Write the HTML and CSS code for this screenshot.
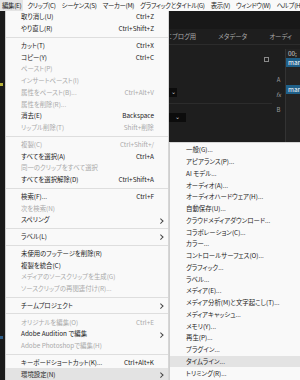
FILE: index.html
```html
<!DOCTYPE html>
<html lang="ja">
<head>
    <meta charset="UTF-8">
    <meta name="viewport" content="width=device-width, initial-scale=1.0">
    <title>編集メニュー</title>
    <link rel="stylesheet" href="styles.css">
</head>
<body>
    <div class="menubar">
        <span class="top-item active">編集(E)</span>
        <span class="top-item">クリップ(C)</span>
        <span class="top-item">シーケンス(S)</span>
        <span class="top-item">マーカー(M)</span>
        <span class="top-item">グラフィックとタイトル(G)</span>
        <span class="top-item">表示(V)</span>
        <span class="top-item">ウィンドウ(W)</span>
        <span class="top-item">ヘルプ(H)</span>
    </div>

    <div class="workspace">
        <div class="app-edge">
            <span class="edge-mark yellow"></span>
            <span class="edge-mark blue"></span>
        </div>

        <ul class="menu main-menu">
            <li class="item"><span class="label">取り消し(U)</span><span class="key">Ctrl+Z</span></li>
            <li class="item"><span class="label">やり直し(R)</span><span class="key">Ctrl+Shift+Z</span></li>
            <li class="sep"></li>
            <li class="item"><span class="label">カット(T)</span><span class="key">Ctrl+X</span></li>
            <li class="item"><span class="label">コピー(Y)</span><span class="key">Ctrl+C</span></li>
            <li class="item off"><span class="label">ペースト(P)</span></li>
            <li class="item off"><span class="label">インサートペースト(I)</span></li>
            <li class="item off"><span class="label">属性をペースト(B)...</span><span class="key">Ctrl+Alt+V</span></li>
            <li class="item off"><span class="label">属性を削除(R)...</span></li>
            <li class="item"><span class="label">消去(E)</span><span class="key">Backspace</span></li>
            <li class="item off"><span class="label">リップル削除(T)</span><span class="key">Shift+削除</span></li>
            <li class="sep"></li>
            <li class="item off"><span class="label">複製(C)</span><span class="key">Ctrl+Shift+/</span></li>
            <li class="item"><span class="label">すべてを選択(A)</span><span class="key">Ctrl+A</span></li>
            <li class="item off"><span class="label">同一のクリップをすべて選択</span></li>
            <li class="item"><span class="label">すべてを選択解除(D)</span><span class="key">Ctrl+Shift+A</span></li>
            <li class="sep"></li>
            <li class="item"><span class="label">検索(F)...</span><span class="key">Ctrl+F</span></li>
            <li class="item off"><span class="label">次を検索(N)</span></li>
            <li class="item has-sub"><span class="label">スペリング</span></li>
            <li class="sep"></li>
            <li class="item has-sub"><span class="label">ラベル(L)</span></li>
            <li class="sep"></li>
            <li class="item"><span class="label">未使用のフッテージを削除(R)</span></li>
            <li class="item"><span class="label">複製を統合(C)</span></li>
            <li class="item off"><span class="label">メディアのソースクリップを生成(G)</span></li>
            <li class="item off"><span class="label">ソースクリップの再関連付け(R)...</span></li>
            <li class="sep"></li>
            <li class="item has-sub"><span class="label">チームプロジェクト</span></li>
            <li class="sep"></li>
            <li class="item off"><span class="label">オリジナルを編集(O)</span><span class="key">Ctrl+E</span></li>
            <li class="item has-sub"><span class="label">Adobe Audition で編集</span></li>
            <li class="item off"><span class="label">Adobe Photoshopで編集(H)</span></li>
            <li class="sep"></li>
            <li class="item"><span class="label">キーボードショートカット(K)...</span><span class="key">Ctrl+Alt+K</span></li>
            <li class="item has-sub hover"><span class="label">環境設定(N)</span></li>
        </ul>

        <div class="side">
            <div class="panel">
                <div class="toolbar"></div>
                <div class="tabs">
                    <span class="tab">：ブログ用</span>
                    <span class="tab">メタデータ</span>
                    <span class="tab">オーディ</span>
                </div>
                <div class="panel-body">
                    <div class="controls">
                        <div class="ctl-row top"><span class="pin"></span></div>
                        <div class="ctl-row"><span class="dropdown">&#8964;</span></div>
                        <div class="ctl-row bottom"><span class="dropdown wide">&#8964;</span></div>
                    </div>
                    <div class="track-head">
                        <span class="tl">A</span>
                        <span class="tl fx">fx</span>
                        <span class="tl">B</span>
                    </div>
                    <div class="track">
                        <span class="timecode">00;</span>
                        <span class="clip first">man</span>
                        <span class="clip second">man</span>
                    </div>
                </div>
            </div>

            <ul class="menu sub-menu">
                <li class="item"><span class="label">一般(G)...</span></li>
                <li class="item"><span class="label">アピアランス(P)...</span></li>
                <li class="item"><span class="label">AI モデル...</span></li>
                <li class="item"><span class="label">オーディオ(A)...</span></li>
                <li class="item"><span class="label">オーディオハードウェア(H)...</span></li>
                <li class="item"><span class="label">自動保存(U)...</span></li>
                <li class="item"><span class="label">クラウドメディアダウンロード...</span></li>
                <li class="item"><span class="label">コラボレーション(C)...</span></li>
                <li class="item"><span class="label">カラー...</span></li>
                <li class="item"><span class="label">コントロールサーフェス(O)...</span></li>
                <li class="item"><span class="label">グラフィック...</span></li>
                <li class="item"><span class="label">ラベル...</span></li>
                <li class="item"><span class="label">メディア(E)...</span></li>
                <li class="item"><span class="label">メディア分析(M)と文字起こし(T)...</span></li>
                <li class="item"><span class="label">メディアキャッシュ...</span></li>
                <li class="item"><span class="label">メモリ(Y)...</span></li>
                <li class="item"><span class="label">再生(P)...</span></li>
                <li class="item"><span class="label">プラグイン...</span></li>
                <li class="item hover"><span class="label">タイムライン...</span></li>
                <li class="item"><span class="label">トリミング(R)...</span></li>
            </ul>
        </div>
    </div>
</body>
</html>
```

FILE: styles.css
```css
* {
    box-sizing: border-box;
}
html, body {
    margin: 0;
    padding: 0;
}
body {
    width: 300px;
    height: 380px;
    overflow: hidden;
    font-family: "Noto Sans CJK JP", "Noto Sans", sans-serif;
    font-size: 6.4px;
    font-feature-settings: "palt";
    color: #222222;
    background-color: #1d1d1d;
}

/* top menu bar */
.menubar {
    display: flex;
    height: 11px;
    align-items: center;
    background-color: #f9f9f9;
    white-space: nowrap;
    overflow: hidden;
    letter-spacing: -0.3px;
}
.top-item {
    height: 11px;
    line-height: 11px;
    padding: 0 2px;
    margin-right: 2px;
}
.top-item.active {
    background-color: #e4e4e4;
}

.workspace {
    display: grid;
    grid-template-columns: 5px 164px 1fr;
    height: 369px;
}

.app-edge {
    display: flex;
    flex-direction: column;
    padding-top: 72px;
    gap: 250px;
    background-color: #1b1b1b;
}
.edge-mark {
    display: block;
    width: 3px;
    height: 3px;
}
.edge-mark.yellow {
    background-color: #b9b43a;
}
.edge-mark.blue {
    background-color: #2d5c86;
}

/* dropdown menus */
.menu {
    list-style: none;
    margin: 0;
    padding: 0;
    background-color: #f9f9f9;
    white-space: nowrap;
}
.main-menu {
    border-left: 1px solid #cfcfcf;
    border-right: 1px solid #d6d6d6;
}
.item {
    position: relative;
    display: flex;
    align-items: center;
    height: 11.75px;
    padding: 0 14px 0 15px;
}
.item .label {
    flex: 1;
}
.item .key {
    text-align: right;
}
.item.off {
    color: #a9a9a9;
}
.item.hover {
    background-color: #e3e3e3;
}
.has-sub::after {
    content: "";
    position: absolute;
    right: 6px;
    top: 4.5px;
    width: 2.5px;
    height: 2.5px;
    border-top: 1px solid #444;
    border-right: 1px solid #444;
    transform: rotate(45deg);
}
.sep {
    height: 5px;
    display: flex;
    align-items: center;
}
.sep::before {
    content: "";
    flex: 1;
    height: 1px;
    background-color: #dedede;
}

.side {
    display: flex;
    flex-direction: column;
    min-width: 0;
}

/* dark application panel */
.panel {
    height: 131px;
    display: flex;
    flex-direction: column;
    background-color: #1e1e1e;
    color: #bdbdbd;
    overflow: hidden;
}
.toolbar {
    height: 18px;
    background-color: #181818;
}
.tabs {
    display: flex;
    gap: 22px;
    height: 16px;
    align-items: center;
    white-space: nowrap;
    overflow: hidden;
    border-bottom: 1px solid #2c2c2c;
    color: #a8a8a8;
}
.panel-body {
    flex: 1;
    display: grid;
    grid-template-columns: 1fr 13px 15px;
    padding-top: 4px;
}
.controls {
    display: flex;
    flex-direction: column;
}
.ctl-row {
    height: 20px;
    padding-top: 8px;
}
.ctl-row.top {
    display: flex;
    justify-content: flex-end;
    height: 30px;
}
.ctl-row.bottom {
    border-top: 1px solid #2c2c2c;
    margin-top: 4px;
}
.pin {
    width: 5px;
    height: 5px;
    border: 1px solid #8a8a8a;
    margin-right: 3px;
}
.dropdown {
    display: inline-block;
    width: 8px;
    height: 9px;
    background-color: #0c0c0c;
    color: #d0d0d0;
    font-size: 6px;
    line-height: 7px;
    text-align: center;
}
.dropdown.wide {
    width: 17px;
}
.track-head {
    display: flex;
    flex-direction: column;
    align-items: center;
    padding-top: 26px;
    gap: 6px;
    font-size: 6px;
    color: #9c9c9c;
}
.tl.fx {
    font-style: italic;
}
.track {
    display: flex;
    flex-direction: column;
    border-left: 1px solid #333;
    background-color: #232323;
    overflow: hidden;
}
.timecode {
    height: 9px;
    line-height: 9px;
    color: #d0d0d0;
    padding-left: 2px;
}
.clip {
    height: 9px;
    line-height: 9px;
    padding-left: 2px;
    overflow: hidden;
    background-color: #1f6089;
    color: #ffffff;
}
.clip.second {
    margin-top: 18px;
}

.sub-menu {
    flex: 1;
    border-left: 1px solid #cfcfcf;
    border-top: 1px solid #d6d6d6;
    padding-top: 1px;
}
.sub-menu .item {
    padding-left: 16px;
}
```
